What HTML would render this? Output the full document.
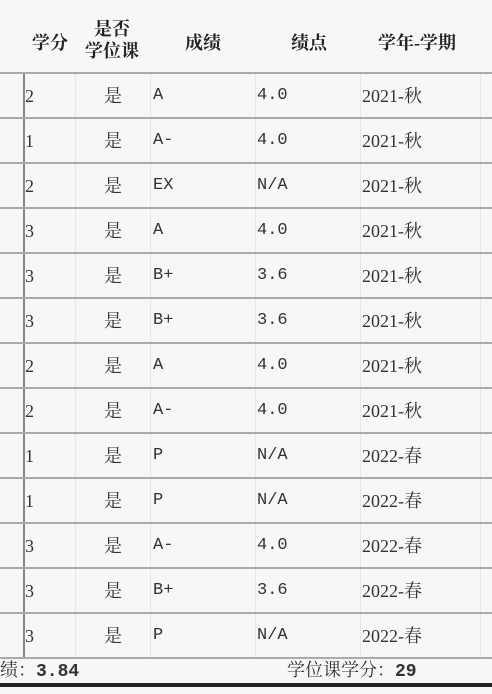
<!DOCTYPE html><html><head><meta charset="utf-8"><style>
body{margin:0;width:492px;height:694px;background:#f7f7f7;position:relative;overflow:hidden;font-family:"Liberation Serif","Noto Serif CJK SC",serif;color:#333}
.h{position:absolute;left:0;width:492px;height:2px;background:#aaa}
.v{position:absolute;top:72px;width:1px;height:585px;background:#e6e6e6}
.t{position:absolute;font-size:18px;line-height:20px;white-space:nowrap}
.m{font-family:"Liberation Mono","Noto Serif CJK SC",monospace;font-size:17px}
.hd{position:absolute;font-weight:bold;font-size:18px;line-height:22px;text-align:center;color:#222}
</style></head><body>
<div class="hd" style="left:28px;top:32px;width:44px">学分</div>
<div class="hd" style="left:80px;top:18px;width:64px">是否<br>学位课</div>
<div class="hd" style="left:178px;top:32px;width:50px">成绩</div>
<div class="hd" style="left:284px;top:32px;width:50px">绩点</div>
<div class="hd" style="left:368px;top:32px;width:98px">学年-学期</div>
<div class="v" style="left:23px;width:2px;background:#888"></div>
<div class="v" style="left:75px"></div><div class="v" style="left:150px"></div>
<div class="v" style="left:255px"></div><div class="v" style="left:360px"></div><div class="v" style="left:480px"></div>
<div id="rows"></div>
<div class="h" style="top:657px"></div>
<div class="t" style="left:0;top:660px;font-size:18px">绩：<b class="m" style="font-size:18px">3.84</b></div>
<div class="t" style="left:287px;top:660px;font-size:18px">学位课学分：<b class="m" style="font-size:18px">29</b></div>
<div style="position:absolute;left:0;top:683px;width:492px;height:4px;background:#222"></div>
<script>
var d=[["2","A","4.0","2021-秋"],["1","A-","4.0","2021-秋"],["2","EX","N/A","2021-秋"],["3","A","4.0","2021-秋"],["3","B+","3.6","2021-秋"],["3","B+","3.6","2021-秋"],["2","A","4.0","2021-秋"],["2","A-","4.0","2021-秋"],["1","P","N/A","2022-春"],["1","P","N/A","2022-春"],["3","A-","4.0","2022-春"],["3","B+","3.6","2022-春"],["3","P","N/A","2022-春"]];
var h="";d.forEach(function(r,i){var y=72+i*45;h+='<div class="h" style="top:'+y+'px"></div>';var ty=y+14;
h+='<div class="t" style="left:25px;top:'+ty+'px">'+r[0]+'</div><div class="t" style="left:104px;top:'+ty+'px">是</div><div class="t m" style="left:153px;top:'+ty+'px">'+r[1]+'</div><div class="t m" style="left:257px;top:'+ty+'px">'+r[2]+'</div><div class="t" style="left:362px;top:'+ty+'px">'+r[3]+'</div>';});
document.getElementById("rows").innerHTML=h;
</script></body></html>
